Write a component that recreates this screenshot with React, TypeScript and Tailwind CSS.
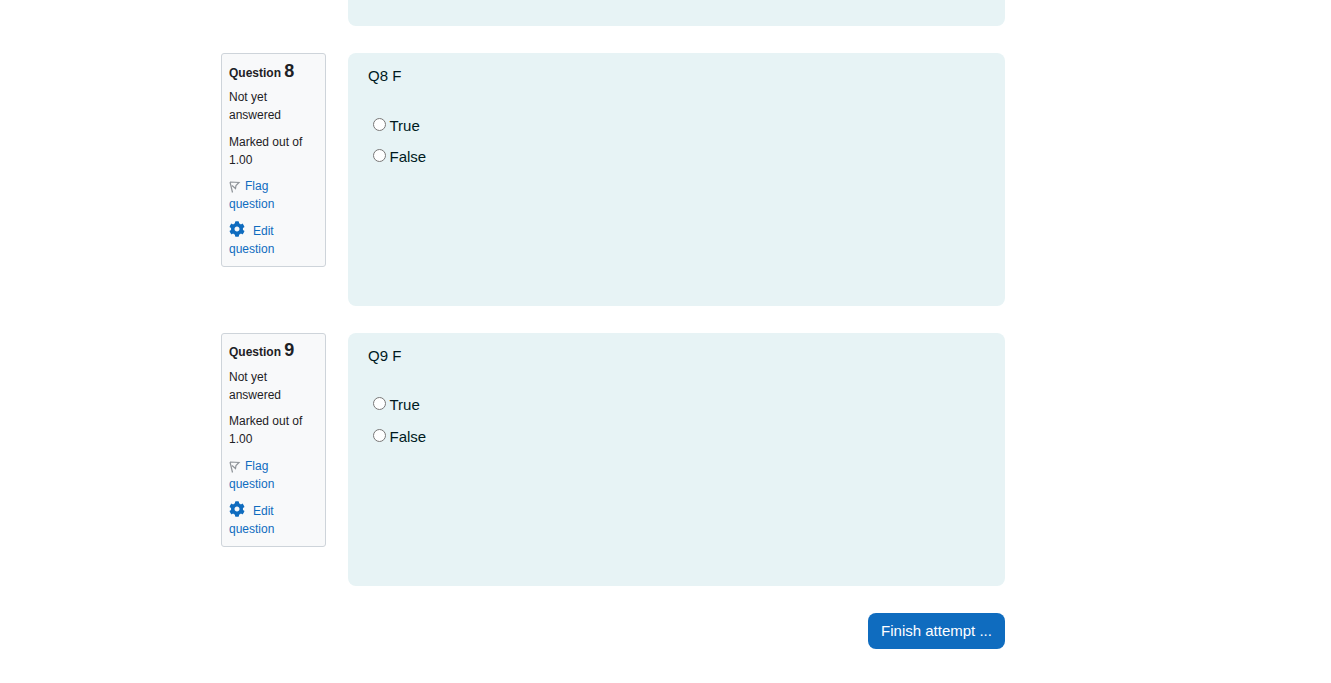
import { FaCog } from "react-icons/fa";

function FlagIcon() {
  return (
    <svg width="12" height="12" viewBox="0 0 12 12" fill="none" stroke="#8f9499" strokeWidth="1.2" className="inline-block align-[-3px]">
      <path d="M1 1 L3.5 11.5 M1 1 L10 1.5 L7 4.5 L6.5 7.5 L3 4.5" />
    </svg>
  );
}

function Question({ num }: { num: number }) {
  return (
    <div className="flex items-start gap-[22px]">
      <div className="w-[105px] shrink-0 rounded-[3px] border border-[#ced4da] bg-[#f8f9fa] px-[7px] pt-[6.3px] pb-[8px] text-[12px] leading-[18px] text-[#1d2125]">
        <h3 className="mb-[6.5px] h-[21px] font-bold leading-[21px]">
          Question <span className="text-[18px]">{num}</span>
        </h3>
        <div className="mb-[8.5px]">Not yet answered</div>
        <div className="mb-[8.7px]">Marked out of 1.00</div>
        <div className="mb-[8px] text-[#0f6cbf]">
          <FlagIcon />
          <span className="ml-[4px]">
            Flag
            <br />
            question
          </span>
        </div>
        <div className="text-[#0f6cbf]">
          <FaCog size={16} className="inline-block align-[-2px]" color="#0f6cbf" />
          <span className="ml-[8px]">Edit question</span>
        </div>
      </div>
      <div className="h-[252.6px] flex-1 rounded-[8px] bg-[#e7f3f5] px-[20px] pt-[12px] text-[15px] leading-[22px] text-[#001a1e]">
        <p className="mb-[22.3px]">Q{num} F</p>
        <div className="flex flex-col pl-[5px]">
          <label className="flex h-[31.7px] items-center">
            <input type="radio" name={`q${num}`} className="mr-[3.5px] mb-[2.8px] h-[13px] w-[13px]" />
            True
          </label>
          <label className="flex h-[31.7px] items-center">
            <input type="radio" name={`q${num}`} className="mr-[3.5px] mb-[2.8px] h-[13px] w-[13px]" />
            False
          </label>
        </div>
      </div>
    </div>
  );
}

export default function App() {
  return (
    <div className="min-h-[683px] bg-white font-['Liberation_Sans',Arial,sans-serif]">
      <div className="ml-[221px] flex w-[784px] flex-col gap-[27px]">
        <div className="ml-[127px] h-[26.4px] rounded-b-[8px] bg-[#e7f3f5]" />
        <Question num={8} />
        <Question num={9} />
        <div className="flex justify-end">
          <button className="h-[36px] w-[137px] rounded-[8px] bg-[#0f6cbf] pt-[1px] text-[15px] text-white">Finish attempt ...</button>
        </div>
      </div>
    </div>
  );
}
